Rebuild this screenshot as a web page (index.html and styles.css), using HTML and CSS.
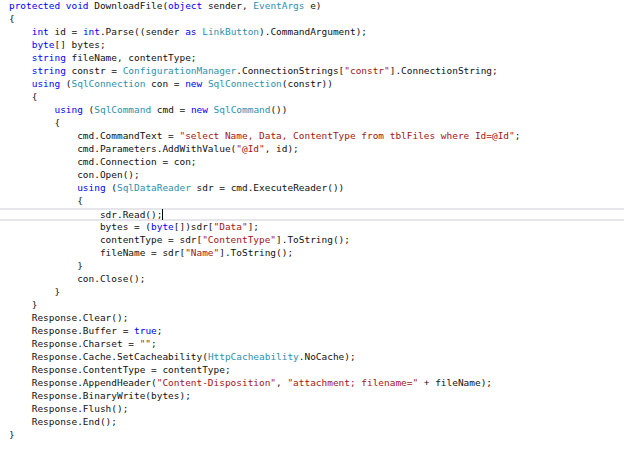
FILE: index.html
```html
<!DOCTYPE html>
<html>
<head>
<meta charset="utf-8">
<link rel="stylesheet" href="styles.css">
</head>
<body>
<div class="editor">
<div class="ln"><span class="k">protected</span> <span class="k">void</span> DownloadFile(<span class="k">object</span> sender, <span class="t">EventArgs</span> e)</div>
<div class="ln">{</div>
<div class="ln">    <span class="k">int</span> id = <span class="k">int</span>.Parse((sender <span class="k">as</span> <span class="t">LinkButton</span>).CommandArgument);</div>
<div class="ln">    <span class="k">byte</span>[] bytes;</div>
<div class="ln">    <span class="k">string</span> fileName, contentType;</div>
<div class="ln">    <span class="k">string</span> constr = <span class="t">ConfigurationManager</span>.ConnectionStrings[<span class="s">"constr"</span>].ConnectionString;</div>
<div class="ln">    <span class="k">using</span> (<span class="t">SqlConnection</span> con = <span class="k">new</span> <span class="t">SqlConnection</span>(constr))</div>
<div class="ln">    {</div>
<div class="ln">        <span class="k">using</span> (<span class="t">SqlCommand</span> cmd = <span class="k">new</span> <span class="t">SqlCommand</span>())</div>
<div class="ln">        {</div>
<div class="ln">            cmd.CommandText = <span class="s">"select Name, Data, ContentType from tblFiles where Id=@Id"</span>;</div>
<div class="ln">            cmd.Parameters.AddWithValue(<span class="s">"@Id"</span>, id);</div>
<div class="ln">            cmd.Connection = con;</div>
<div class="ln">            con.Open();</div>
<div class="ln">            <span class="k">using</span> (<span class="t">SqlDataReader</span> sdr = cmd.ExecuteReader())</div>
<div class="ln">            {</div>
<div class="ln current">                sdr.Read();<span class="caret"></span></div>
<div class="ln">                bytes = (<span class="k">byte</span>[])sdr[<span class="s">"Data"</span>];</div>
<div class="ln">                contentType = sdr[<span class="s">"ContentType"</span>].ToString();</div>
<div class="ln">                fileName = sdr[<span class="s">"Name"</span>].ToString();</div>
<div class="ln">            }</div>
<div class="ln">            con.Close();</div>
<div class="ln">        }</div>
<div class="ln">    }</div>
<div class="ln">    Response.Clear();</div>
<div class="ln">    Response.Buffer = <span class="k">true</span>;</div>
<div class="ln">    Response.Charset = <span class="s">""</span>;</div>
<div class="ln">    Response.Cache.SetCacheability(<span class="t">HttpCacheability</span>.NoCache);</div>
<div class="ln">    Response.ContentType = contentType;</div>
<div class="ln">    Response.AppendHeader(<span class="s">"Content-Disposition"</span>, <span class="s">"attachment; filename="</span> + fileName);</div>
<div class="ln">    Response.BinaryWrite(bytes);</div>
<div class="ln">    Response.Flush();</div>
<div class="ln">    Response.End();</div>
<div class="ln">}</div>
</div>
</body>
</html>
```
FILE: styles.css
```css
html, body {
  margin: 0;
  padding: 0;
  background: #ffffff;
}
.editor {
  display: flex;
  flex-direction: column;
  padding: 0 0 0 9px;
  font-family: "DejaVu Sans Mono", "Liberation Mono", monospace;
  font-size: 9.45px;
  color: #111111;
}
.ln {
  white-space: pre;
  height: 13px;
  line-height: 12px;
}
.current {
  margin-left: -9px;
  padding-left: 9px;
  box-shadow: inset 0 2px 0 #e6e6ea, inset 0 -2px 0 #e6e6ea;
  line-height: 13px;
}
.k { color: #0000ff; }
.t { color: #2b91af; }
.s { color: #a31515; }
.caret {
  display: inline-block;
  width: 0;
  height: 11px;
  border-left: 1px solid #000000;
  vertical-align: -2px;
}
```
